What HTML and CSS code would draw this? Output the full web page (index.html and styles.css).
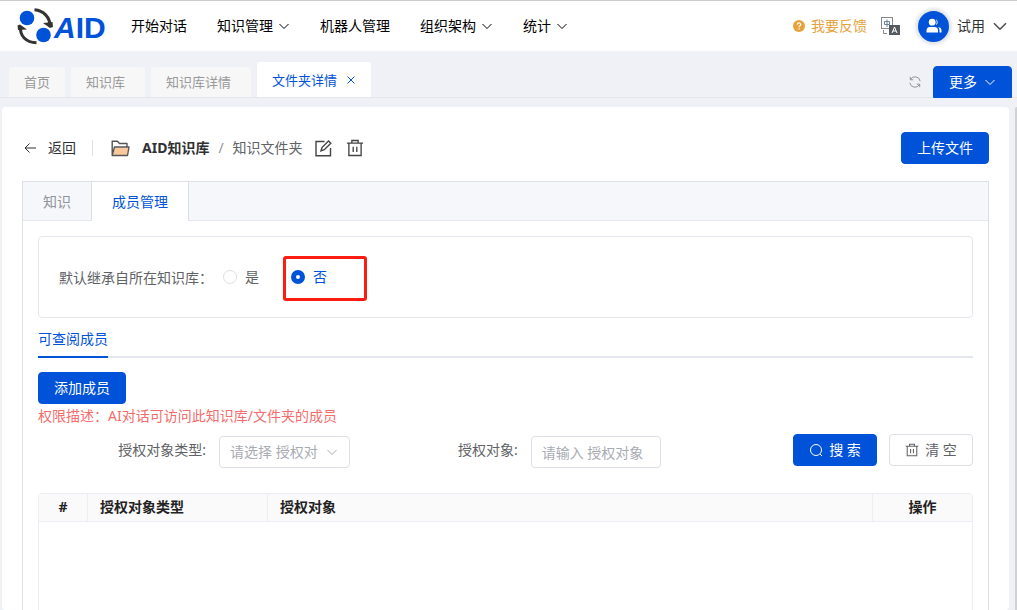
FILE: index.html
```html
<!DOCTYPE html>
<html lang="zh-CN">
<head>
<meta charset="utf-8">
<meta name="viewport" content="width=device-width, initial-scale=1">
<title>文件夹详情</title>
<link rel="stylesheet" href="styles.css">
</head>
<body>
<svg width="0" height="0" class="sprite" aria-hidden="true">
  <symbol id="chevron" viewBox="0 0 12 12"><path d="M1.5 4 6 8.5 10.5 4" fill="none" stroke="currentColor" stroke-width="1"/></symbol>
  <symbol id="trash" viewBox="0 0 20 20"><path d="M1 4.500H19M6.500 4V1.700H13.500V4M3.200 5V18.300H16.800V5M8 8.500V14.500M12 8.500V14.500" fill="none" stroke="currentColor" stroke-width="1.500"/></symbol>
</svg>

<header class="header">
  <a class="logo" href="#" aria-label="AID">
    <svg width="90" height="38" viewBox="0 0 90 38">
      <circle cx="11" cy="11" r="7.300" fill="#0052d9"/>
      <circle cx="27.500" cy="28" r="7.300" fill="#0052d9"/>
      <path d="M18.500 2.800C27 3.500 34.500 10 34 20" fill="none" stroke="#333" stroke-width="3"/>
      <path d="M27 16 36.500 15 37 20 34 21Z" fill="#333"/>
      <path d="M20.500 35.800C10 35.500 3.500 29 4.500 19" fill="none" stroke="#333" stroke-width="3"/>
      <path d="M1.500 18.500 4 17.500 11 22.500 2 23Z" fill="#333"/>
      <text class="logo-text" x="38" y="31"><tspan class="logo-slant">A</tspan>ID</text>
    </svg>
  </a>
  <nav class="nav">
    <a href="#">开始对话</a>
    <a href="#">知识管理<svg width="12" height="12"><use href="#chevron"/></svg></a>
    <a href="#">机器人管理</a>
    <a href="#">组织架构<svg width="12" height="12"><use href="#chevron"/></svg></a>
    <a href="#">统计<svg width="12" height="12"><use href="#chevron"/></svg></a>
  </nav>
  <div class="tools">
    <a class="feedback" href="#">
      <svg width="12" height="12" viewBox="0 0 12 12"><circle cx="6" cy="6" r="6" fill="#e6a23c"/><path d="M4.300 4.700C4.300 2.300 7.800 2.500 7.700 4.600 7.600 5.800 6 5.600 6 7.200M6 8.200V9.400" fill="none" stroke="#fff" stroke-width="1.200"/></svg>
      我要反馈
    </a>
    <button class="plain" type="button" aria-label="切换语言">
      <svg width="19" height="18" viewBox="0 0 19 18"><rect x=".5" y=".5" width="11" height="11" fill="#fff" stroke="#888" stroke-width="1"/><path d="M3.500 4.500H8.500V7.500H3.500ZM6 2.500V10" fill="none" stroke="#6b8299" stroke-width="1"/><rect x="8" y="8" width="11" height="10" fill="#555a60"/><path d="M11 16 13.500 10 16 16M12 14H15" fill="none" stroke="#fff" stroke-width="1"/><path d="M2.500 13V16.500H6" fill="none" stroke="#888"/></svg>
    </button>
    <button class="user" type="button">
      <span class="avatar"><svg width="16" height="16" viewBox="0 0 16 16" fill="#fff"><circle cx="6.200" cy="4.200" r="3.400"/><path d="M.5 14.500V12.500Q.5 9 4 9H8.500Q12 9 12 12.500V14.500ZM10 1.200A3.500 3.500 0 0 1 10 7.200Q11.800 4.200 10 1.200ZM12.300 9Q15.500 9.500 15.500 12.500V14.500H13.500V12.500Q13.500 10.500 12.300 9Z"/></svg></span>
      试用
      <svg class="user-arrow" width="16" height="16"><use href="#chevron"/></svg>
    </button>
  </div>
</header>

<div class="tabbar">
  <a class="tag tag-home" href="#">首页</a>
  <a class="tag" href="#">知识库</a>
  <a class="tag" href="#">知识库详情</a>
  <a class="tag tag-active" href="#">文件夹详情<svg width="8" height="8" viewBox="0 0 8 8"><path d="M.5.5 7.500 7.500M7.500.5.5 7.500" stroke="currentColor" stroke-width="1"/></svg></a>
  <button class="plain refresh" type="button" aria-label="刷新">
    <svg width="12" height="12" viewBox="0 0 12 12" fill="none" stroke="currentColor" stroke-width="1"><path d="M.8 6.800A5.200 5.200 0 0 0 10.500 8.500M11.200 5.200A5.200 5.200 0 0 0 1.500 3.500M1.300.8V3.800H4.200M10.700 11.200V8.200H7.800"/></svg>
  </button>
  <button class="btn btn-primary more" type="button">更多<svg width="12" height="12"><use href="#chevron"/></svg></button>
</div>

<div class="body">
  <main class="card">
    <div class="title-row">
      <a class="back" href="#"><svg width="12" height="12" viewBox="0 0 12 12"><path d="M12 6H1M5.500 1.500 1 6 5.500 10.500" fill="none" stroke="currentColor"/></svg>返回</a>
      <svg class="folder" width="19" height="17" viewBox="0 0 19 17"><path d="M2.200 15 4 7.500H17.500L16.200 15Z" fill="#f9c89b"/><path d="M1.200 15V1.200H6.500L8.500 3.500H16V6.500M1.200 15.500 3.500 7H18L16.500 15.500Z" fill="none" stroke="#555" stroke-width="1.400" stroke-linejoin="round"/></svg>
      <span class="crumb-root">AID知识库</span>
      <span class="crumb-sep">/</span>
      <span class="crumb-leaf">知识文件夹</span>
      <button class="plain edit" type="button" aria-label="编辑">
        <svg width="17" height="17" viewBox="0 0 17 17" fill="none" stroke="currentColor" stroke-width="1.400"><path d="M9.500 1.500H1V15.800H15.500V8"/><path d="M6 10.800 7 7.500 13.500 1 15.800 3.200 9.300 9.700Z"/></svg>
      </button>
      <button class="plain delete" type="button" aria-label="删除"><svg width="18" height="18"><use href="#trash"/></svg></button>
      <button class="btn btn-primary upload" type="button">上传文件</button>
    </div>

    <section class="panel">
      <div class="panel-tabs">
        <button class="panel-tab" type="button">知识</button>
        <button class="panel-tab panel-tab-active" type="button">成员管理</button>
      </div>
      <div class="panel-body">
        <div class="inherit" role="radiogroup" aria-labelledby="inherit-label">
          <span id="inherit-label" class="inherit-label">默认继承自所在知识库：</span>
          <label class="radio"><input type="radio" name="inherit">是</label>
          <label class="radio radio-marked"><input type="radio" name="inherit" checked>否</label>
        </div>
        <div class="subtabs"><button class="subtab" type="button">可查阅成员</button></div>
        <button class="btn btn-primary add" type="button">添加成员</button>
        <p class="hint">权限描述：AI对话可访问此知识库/文件夹的成员</p>
        <form class="filters">
          <div class="field">
            <label for="type">授权对象类型:</label>
            <div class="select"><select id="type"><option>请选择 授权对</option></select><svg width="12" height="12"><use href="#chevron"/></svg></div>
          </div>
          <div class="field">
            <label for="target">授权对象:</label>
            <input id="target" type="text" placeholder="请输入 授权对象">
          </div>
          <div class="actions">
            <button class="btn btn-primary" type="button"><svg width="14" height="14" viewBox="0 0 14 14"><circle cx="7" cy="7" r="5.500" fill="none" stroke="currentColor"/><path d="M11 11 13 13" stroke="currentColor"/></svg>搜 索</button>
            <button class="btn" type="button"><svg width="14" height="14"><use href="#trash"/></svg>清 空</button>
          </div>
        </form>
        <div class="table-wrap">
          <table class="table">
            <thead><tr><th class="col-index">#</th><th class="col-type">授权对象类型</th><th class="col-target">授权对象</th><th class="col-action">操作</th></tr></thead>
            <tbody></tbody>
          </table>
        </div>
      </div>
    </section>
  </main>
  <div class="scrollbar"></div>
</div>
</body>
</html>
```
FILE: styles.css
```css
*, *::before, *::after { box-sizing: border-box; }
html, body { height: 100%; }
body {
  margin: 0;
  display: flex;
  flex-direction: column;
  overflow: hidden;
  background: #f0f1f6;
  color: #303133;
  font: 14px/20px "Noto Sans", "Noto Sans CJK SC", sans-serif;
}
a { color: inherit; text-decoration: none; }
button, input, select { font: inherit; color: inherit; }
svg { flex: none; display: block; }
.sprite { position: absolute; }
.plain { display: flex; padding: 0; border: 0; background: none; }

.header {
  display: flex;
  align-items: center;
  flex: none;
  height: 51px;
  padding: 0 9px 0 16px;
  border-top: 1px solid #ccc;
  background: #fff;
  white-space: nowrap;
}
.logo svg { overflow: visible; }
.logo-text { font: bold 30px "Liberation Sans", sans-serif; fill: #0052d9; }
.logo-slant { font-style: italic; }
.nav { display: flex; gap: 30px; margin-left: 25px; color: #000; }
.nav a { display: flex; align-items: center; gap: 5px; }
.tools { display: flex; align-items: center; margin-left: auto; }
.feedback { display: flex; align-items: center; gap: 6px; margin-right: 14px; color: #e6a23c; }
.user { display: flex; align-items: center; margin-left: 18px; padding: 0; border: 0; background: none; }
.avatar {
  display: flex;
  align-items: center;
  justify-content: center;
  width: 31px;
  height: 31px;
  margin-right: 8px;
  border-radius: 50%;
  background: #0052d9;
  box-shadow: 0 0 3px 3px #e4e6ea;
}
.user-arrow { margin-left: 7px; color: #444; }

.tabbar {
  display: flex;
  align-items: flex-end;
  flex: none;
  gap: 6px;
  height: 47px;
  padding: 0 5px 0 9px;
  border-bottom: 1px solid #e4e6eb;
  font-size: 13px;
}
.tag {
  display: flex;
  align-items: center;
  height: 30px;
  padding: 0 20px 0 15px;
  border-radius: 3px 3px 0 0;
  background: #f7f7f7;
  color: #999;
}
.tag-home { padding-right: 15px; }
.tag-active { gap: 10px; height: 35px; padding-right: 16px; background: #fff; color: #0052d9; }
.refresh { align-items: center; height: 30px; margin-left: auto; color: #909399; }

.btn {
  display: inline-flex;
  align-items: center;
  justify-content: center;
  gap: 6px;
  height: 32px;
  padding: 0 15px;
  border: 1px solid #dcdfe6;
  border-radius: 4px;
  background: #fff;
  color: #606266;
  font-size: 14px;
  white-space: nowrap;
}
.btn-primary { border-color: #0052d9; background: #0052d9; color: #fff; }
.btn.more { gap: 7px; margin: 0 0 -1px 6px; border-radius: 4px 4px 0 0; }

.body { display: flex; flex: 1; gap: 6px; min-height: 0; padding: 9px 0 0 2px; }
.card {
  display: flex;
  flex-direction: column;
  flex: 1;
  min-width: 0;
  padding: 25px 20px 0;
  border-radius: 4px;
  background: #fff;
}
.scrollbar { width: 2px; border-radius: 2px 0 0 0; background: #d0d1d5; }

.title-row { display: flex; align-items: center; height: 32px; margin-bottom: 17px; }
.back { display: flex; align-items: center; gap: 12px; margin-left: 2px; }
.back::after { content: ""; width: 1px; height: 16px; margin-left: 4px; background: #dcdfe6; }
.folder { margin: 0 12px 0 18px; }
.crumb-root { font-weight: bold; }
.crumb-sep { margin: 0 9px; color: #909399; }
.crumb-leaf { color: #606266; }
.edit { margin: 0 14px 0 12px; color: #444; }
.delete { color: #444; }
.upload { margin-left: auto; }

.panel { display: flex; flex-direction: column; flex: 1; border: 1px solid #dcdfe6; border-bottom: 0; }
.panel-tabs { display: flex; border-bottom: 1px solid #e4e7ed; background: #f5f7fa; }
.panel-tab { height: 39px; margin-bottom: -1px; padding: 0 20px; border: 0; background: none; color: #909399; }
.panel-tab-active {
  border: solid #dcdfe6;
  border-width: 0 1px;
  background: #fff;
  color: #0052d9;
}
.panel-body { display: flex; flex-direction: column; flex: 1; padding: 15px 15px 0; }

.inherit {
  display: flex;
  align-items: center;
  height: 82px;
  padding: 0 20px;
  border: 1px solid #e4e7ed;
  border-radius: 4px;
  color: #606266;
}
.inherit-label { width: 164px; padding-top: 2px; white-space: nowrap; }
.radio { position: relative; display: flex; align-items: center; gap: 8px; margin-right: 32px; }
.radio input {
  appearance: none;
  width: 14px;
  height: 14px;
  margin: 0;
  border: 1px solid #dcdfe6;
  border-radius: 50%;
  background: #fff;
}
.radio input:checked { border: 5px solid #0052d9; }
.radio-marked { color: #0052d9; }
.radio-marked::after {
  content: "";
  position: absolute;
  top: -11px;
  left: -8px;
  width: 84px;
  height: 45px;
  border: 3px solid #fb1c12;
  border-radius: 3px;
}

.subtabs { display: flex; height: 40px; border-bottom: 2px solid #e4e7ed; }
.subtab {
  height: 40px;
  padding: 4px 0 0;
  border: 0;
  border-bottom: 2px solid #0052d9;
  background: none;
  color: #0052d9;
}
.add { align-self: flex-start; margin-top: 14px; }
.hint { margin: 2px 0 8px; color: #f56c6c; }

.filters { display: grid; grid-template-columns: repeat(3, 1fr); }
.field { display: flex; align-items: flex-end; gap: 13px; height: 34px; }
.field label { flex: 0 0 168px; height: 28px; color: #606266; text-align: right; }
.select { position: relative; flex: 1; min-width: 0; }
.select svg { position: absolute; top: 10px; right: 12px; color: #a8abb2; }
.field select, .field input {
  appearance: none;
  display: block;
  width: 100%;
  min-width: 0;
  height: 32px;
  padding: 0 10px;
  border: 1px solid #dcdfe6;
  border-radius: 4px;
  background: #fff;
  color: #a8abb2;
}
.field select { padding-right: 28px; }
.field input::placeholder { color: #a8abb2; }
.actions { display: flex; justify-content: flex-end; gap: 12px; }
.actions .btn { min-width: 84px; }

.table-wrap { flex: 1; margin-top: 25px; border: 1px solid #ebeef5; border-bottom: 0; border-radius: 4px 4px 0 0; }
.table { width: 100%; border-spacing: 0; table-layout: fixed; }
.table th {
  height: 28px;
  padding: 0 12px 1px;
  border-bottom: 1px solid #ebeef5;
  border-right: 1px solid #ebeef5;
  background: #fafafa;
  color: #222;
  line-height: 20px;
  text-align: left;
}
.table th:last-child { border-right: 0; }
.table .col-index { width: 49px; text-align: center; }
.col-type { width: 180px; }
.table .col-action { width: 99px; text-align: center; }
```
